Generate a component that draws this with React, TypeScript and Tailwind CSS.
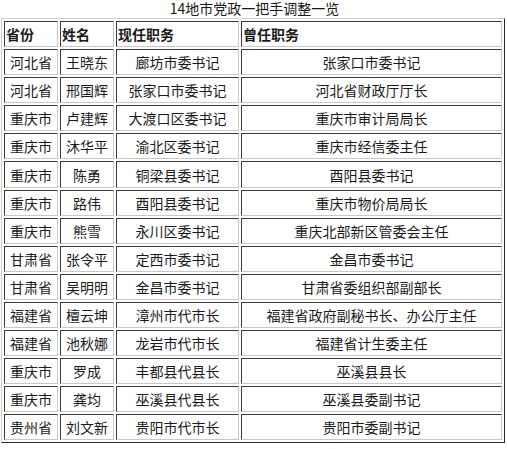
import React from "react";

const rows: [string, string, string, string][] = [
  ["河北省", "王晓东", "廊坊市委书记", "张家口市委书记"],
  ["河北省", "邢国辉", "张家口市委书记", "河北省财政厅厅长"],
  ["重庆市", "卢建辉", "大渡口区委书记", "重庆市审计局局长"],
  ["重庆市", "沐华平", "渝北区委书记", "重庆市经信委主任"],
  ["重庆市", "陈勇", "铜梁县委书记", "酉阳县委书记"],
  ["重庆市", "路伟", "酉阳县委书记", "重庆市物价局局长"],
  ["重庆市", "熊雪", "永川区委书记", "重庆北部新区管委会主任"],
  ["甘肃省", "张令平", "定西市委书记", "金昌市委书记"],
  ["甘肃省", "吴明明", "金昌市委书记", "甘肃省委组织部副部长"],
  ["福建省", "檀云坤", "漳州市代市长", "福建省政府副秘书长、办公厅主任"],
  ["福建省", "池秋娜", "龙岩市代市长", "福建省计生委主任"],
  ["重庆市", "罗成", "丰都县代县长", "巫溪县县长"],
  ["重庆市", "龚均", "巫溪县代县长", "巫溪县委副书记"],
  ["贵州省", "刘文新", "贵阳市代市长", "贵阳市委副书记"],
];

const cell =
  "h-[26.1px] p-0 border border-solid border-t-[#3a3a3a] border-l-[#3a3a3a] border-b-[#c8c8c8] border-r-[#c8c8c8] leading-[24px]";

export default function App() {
  return (
    <div
      className="w-[507px] h-[449px] bg-white text-[#1a1a1a] text-[14px] overflow-hidden"
      style={{ fontFamily: '"Noto Sans CJK SC", "Noto Sans", sans-serif' }}
    >
      <div className="h-[18px] leading-[17px] text-center pl-[2px]">14地市党政一把手调整一览</div>
      <table className="ml-[1px] w-[502px] table-fixed border-separate border-spacing-[2px] border border-solid border-t-[#d0d0d0] border-l-[#d0d0d0] border-b-[#2a2a2a] border-r-[#2a2a2a]">
        <colgroup>
          <col className="w-[54px]" />
          <col className="w-[54px]" />
          <col className="w-[123px]" />
          <col className="w-[261px]" />
        </colgroup>
        <thead>
          <tr>
            <th className={`${cell} text-left font-bold pl-[1px]`}>省份</th>
            <th className={`${cell} text-left font-bold pl-[1px]`}>姓名</th>
            <th className={`${cell} text-left font-bold pl-[1px]`}>现任职务</th>
            <th className={`${cell} text-left font-bold pl-[1px]`}>曾任职务</th>
          </tr>
        </thead>
        <tbody>
          {rows.map((r, i) => (
            <tr key={i}>
              {r.map((c, j) => (
                <td key={j} className={`${cell} text-center whitespace-nowrap`}>
                  {c}
                </td>
              ))}
            </tr>
          ))}
        </tbody>
      </table>
    </div>
  );
}
